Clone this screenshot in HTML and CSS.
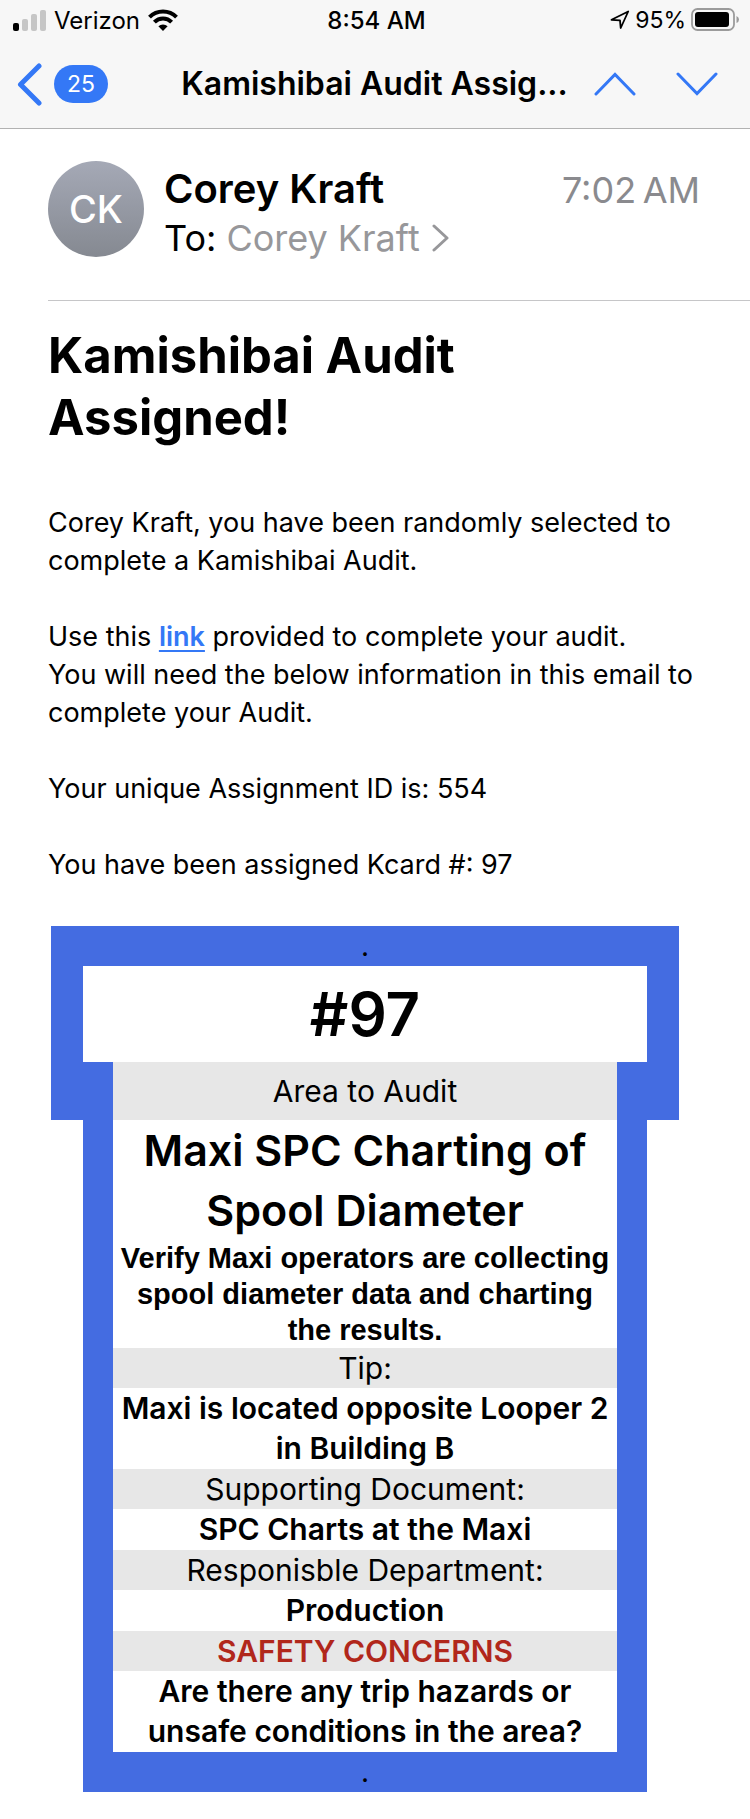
FILE: index.html
```html
<!DOCTYPE html>
<html lang="en">
<head>
<meta charset="utf-8">
<meta name="viewport" content="width=device-width, initial-scale=1">
<title>Kamishibai Audit Assigned!</title>
<link rel="stylesheet" href="styles.css">
</head>
<body>
<header class="top">
  <div class="status">
    <div class="status-left">
      <svg class="signal" width="33" height="21" viewBox="0 0 33 21" aria-hidden="true">
        <rect x="0" y="13" width="6" height="8" rx="2" fill="#000"/>
        <rect x="9" y="9" width="6" height="12" rx="2" fill="#c6c6c6"/>
        <rect x="18" y="4" width="6" height="17" rx="2" fill="#c6c6c6"/>
        <rect x="27" y="0" width="6" height="21" rx="2" fill="#c6c6c6"/>
      </svg>
      <span class="carrier">Verizon</span>
      <svg class="wifi" width="30" height="22" viewBox="0 0 30 22" aria-hidden="true">
        <g fill="none" stroke="#000" stroke-width="4">
          <path d="M1.5 8.2a19 19 0 0 1 27 0"/>
          <path d="M6.4 13.2a12 12 0 0 1 17.200 0"/>
        </g>
        <path d="M15 22l-4.600-4.700a6.500 6.500 0 0 1 9.200 0z"/>
      </svg>
    </div>
    <time class="clock">8:54 AM</time>
    <div class="status-right">
      <svg class="location" width="20" height="20" viewBox="0 0 20 20" aria-hidden="true">
        <path d="M1.500 9.800L18.200 1.500 10.700 18 10 10.300z" fill="none" stroke="#000" stroke-width="1.800" stroke-linejoin="round"/>
      </svg>
      <span class="percent">95%</span>
      <svg class="battery" width="49" height="24" viewBox="0 0 49 24" aria-hidden="true">
        <rect x="1" y="1" width="42" height="21" rx="5.500" fill="none" stroke="#9b9b9b" stroke-width="1.800"/>
        <rect x="4" y="4" width="34" height="15" rx="3" fill="#000"/>
        <path d="M45.500 8q2.500 1 2.500 3.500t-2.500 3.500z" fill="#9b9b9b"/>
      </svg>
    </div>
  </div>
  <nav class="nav">
    <button class="back" type="button" aria-label="Back, 25 unread">
      <svg width="25" height="43" viewBox="0 0 25 43" aria-hidden="true"><path d="M22 3L3.500 21.500 22 40" fill="none" stroke="#3478f6" stroke-width="5" stroke-linecap="round" stroke-linejoin="round"/></svg>
      <span class="unread">25</span>
    </button>
    <span class="nav-title">Kamishibai Audit Assig...</span>
    <div class="pager">
      <button class="page" type="button" aria-label="Previous message">
        <svg width="42" height="24" viewBox="0 0 42 24" aria-hidden="true"><path d="M2 22L21 2.500 40 22" fill="none" stroke="#3478f6" stroke-width="3" stroke-linecap="round"/></svg>
      </button>
      <button class="page" type="button" aria-label="Next message">
        <svg width="42" height="24" viewBox="0 0 42 24" aria-hidden="true"><path d="M2 2L21 21.500 40 2" fill="none" stroke="#3478f6" stroke-width="3" stroke-linecap="round"/></svg>
      </button>
    </div>
  </nav>
</header>
<main class="mail">
  <section class="sender">
    <div class="avatar">CK</div>
    <div class="who">
      <div class="from">Corey Kraft</div>
      <div class="to">To: <a class="recipient" href="#">Corey Kraft
        <svg width="17" height="28" viewBox="0 0 17 28" aria-hidden="true"><path d="M2 2l13 12L2 26" fill="none" stroke="#97979a" stroke-width="3" stroke-linecap="round" stroke-linejoin="round"/></svg></a></div>
    </div>
    <time class="sent">7:02&#8201;AM</time>
  </section>
  <article class="message">
    <h1 class="subject">Kamishibai Audit<br>Assigned!</h1>
    <p class="para">Corey Kraft, you have been randomly selected to complete a Kamishibai Audit.</p>
    <p class="para">Use this <a class="link" href="#">link</a> provided to complete your audit.<br>You will need the below information in this email to complete your Audit.</p>
    <p class="para">Your unique Assignment ID is: 554</p>
    <p class="para">You have been assigned Kcard #: 97</p>
    <section class="kcard">
      <div class="kcard-head">
        <div class="dot">.</div>
        <h2 class="number">#97</h2>
        <div class="area">Area to Audit</div>
      </div>
      <div class="kcard-body">
        <h3 class="task">Maxi SPC Charting of Spool Diameter</h3>
        <p class="check">Verify Maxi operators are collecting spool diameter data and charting the results.</p>
        <dl class="facts">
          <dt class="label">Tip:</dt>
          <dd class="value">Maxi is located opposite Looper 2 in Building B</dd>
          <dt class="label">Supporting Document:</dt>
          <dd class="value">SPC Charts at the Maxi</dd>
          <dt class="label">Responisble Department:</dt>
          <dd class="value">Production</dd>
          <dt class="label safety">SAFETY CONCERNS</dt>
          <dd class="value">Are there any trip hazards or unsafe conditions in the area?</dd>
        </dl>
        <div class="dot">.</div>
      </div>
    </section>
  </article>
</main>
</body>
</html>
```

FILE: styles.css
```css
* {
  box-sizing: border-box;
}

body,
h1,
h2,
h3,
p,
dl,
dd {
  margin: 0;
}

body {
  background: #fff;
  color: #000;
  font-family: Inter, "Liberation Sans", sans-serif;
}

button {
  padding: 0;
  border: 0;
  background: none;
  font: inherit;
}

svg {
  display: block;
  flex: none;
}

.top {
  background: #f7f7f7;
  border-bottom: 1px solid #b2b2b2;
}

.status {
  display: grid;
  grid-template-columns: 1fr auto 1fr;
  align-items: center;
  height: 40px;
  padding: 0 10px 0 13px;
  font-size: 24px;
}

.status-left,
.status-right {
  display: flex;
  align-items: center;
}

.status-left {
  gap: 8px;
}

.status-right {
  justify-content: flex-end;
  gap: 5px;
  font-size: 23px;
}

.clock {
  font-weight: 500;
}

.nav {
  display: grid;
  grid-template-columns: 144px 1fr 130px;
  align-items: center;
  height: 88px;
  padding: 0 32px 0 17px;
}

.back {
  display: flex;
  align-items: center;
  gap: 12px;
}

.unread {
  padding: 0 13px;
  border-radius: 19px;
  background: #3478f6;
  color: #fff;
  font-size: 23px;
  line-height: 38px;
}

.nav-title {
  font-size: 32px;
  font-weight: 600;
  line-height: 40px;
  text-align: center;
  white-space: nowrap;
}

.pager {
  display: flex;
  justify-content: flex-end;
  gap: 40px;
}

.sender {
  display: flex;
  gap: 20px;
  margin-left: 48px;
  padding: 32px 50px 41px 0;
  border-bottom: 1px solid #c6c6c8;
}

.avatar {
  display: flex;
  flex: none;
  align-items: center;
  justify-content: center;
  width: 96px;
  height: 96px;
  border-radius: 50%;
  background: linear-gradient(#a5a9b6, #858991);
  color: #fff;
  font-size: 38px;
  font-weight: 500;
}

.who {
  flex: 1;
}

.from {
  font-size: 40px;
  font-weight: 600;
  line-height: 56px;
}

.to {
  display: flex;
  gap: 10px;
  font-size: 36px;
  line-height: 42px;
}

.recipient {
  display: flex;
  align-items: center;
  gap: 12px;
  color: #97979a;
  text-decoration: none;
}

.sent {
  color: #8a8a8e;
  font-size: 36px;
  line-height: 58px;
}

.message {
  padding: 24px 48px 28px;
}

.subject {
  margin-bottom: 55px;
  font-size: 49px;
  font-weight: 700;
  line-height: 62px;
}

.para {
  margin-bottom: 38px;
  font-size: 27px;
  line-height: 38px;
}

.link {
  color: #3478f6;
  font-weight: 600;
  text-underline-offset: 4px;
}

.kcard {
  margin: 42px 23px 0 3px;
  text-align: center;
}

.kcard-head {
  padding: 0 32px;
  background: #446ce1;
}

.dot {
  height: 40px;
  font-size: 28px;
  line-height: 40px;
}

.number {
  background: #fff;
  font-size: 60px;
  font-weight: 600;
  line-height: 96px;
}

.area {
  margin: 0 30px;
  background: #e7e7e7;
  font-size: 30px;
  line-height: 58px;
}

.kcard-body {
  margin: 0 32px;
  padding: 0 30px;
  background: #446ce1;
}

.task {
  background: #fff;
  font-size: 43px;
  font-weight: 600;
  line-height: 60px;
}

.check {
  padding: 0 4px;
  background: #fff;
  font-family: "Liberation Sans", Arial, sans-serif;
  font-size: 29px;
  font-weight: 700;
  line-height: 36px;
}

.facts {
  font-size: 30px;
  line-height: 40px;
}

.label {
  background: #e7e7e7;
}

.value {
  padding-bottom: 1px;
  background: #fff;
  font-weight: 600;
}

.safety {
  color: #b1271b;
  font-weight: 600;
}
```
